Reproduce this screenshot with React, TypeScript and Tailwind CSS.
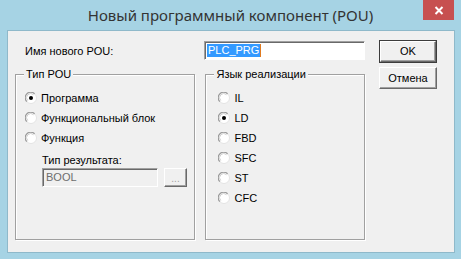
import React from "react";

const font = { fontFamily: '"Liberation Sans", Arial, sans-serif' };

function Radio({ checked }: { checked?: boolean }) {
  return (
    <svg width="12" height="12" viewBox="0 0 12 12" className="shrink-0">
      <circle cx="6" cy="6" r="5.5" fill="#ffffff" stroke="#e3e3e3" strokeWidth="1" />
      <path d="M1.8 9.6 A5 5 0 0 1 9.6 1.8" fill="none" stroke="#9a9a9a" strokeWidth="1.2" />
      <path d="M2.8 8.6 A3.8 3.8 0 0 1 8.6 2.8" fill="none" stroke="#d0d0d0" strokeWidth="1" />
      {checked && <circle cx="6" cy="6" r="2" fill="#000" />}
    </svg>
  );
}

function RadioRow({ label, checked }: { label: string; checked?: boolean }) {
  return (
    <div className="flex h-[20px] items-center gap-[4px]">
      <Radio checked={checked} />
      <span className="text-[11px] leading-[13px] text-black">{label}</span>
    </div>
  );
}

function Group({ title, className, children }: { title: string; className: string; children: React.ReactNode }) {
  return (
    <div className={"relative border border-[#a0a0a0] shadow-[inset_1px_1px_0_#ffffff,1px_1px_0_#ffffff] " + className}>
      <span className="absolute -top-[7px] left-[8px] bg-[#f0f0f0] px-[2px] text-[11px] leading-[13px] text-black">
        {title}
      </span>
      {children}
    </div>
  );
}

export default function App() {
  return (
    <div className="w-[461px] h-[259px] bg-[#a6d3e4] flex flex-col" style={font}>
      <div className="relative h-[30px] flex items-center justify-center">
        <span
          className="text-[15px] text-[#333333] leading-[20px] pb-[1px]"
          style={{ fontFamily: '"Noto Sans", "Open Sans", sans-serif' }}
        >
          Новый программный компонент (POU)
        </span>
        <div className="absolute left-[423px] top-0 w-[31px] h-[20px] bg-[#c75050] flex items-center justify-center">
          <svg width="10" height="9" viewBox="0 0 10 9">
            <path d="M1.5 1 L8.5 8 M8.5 1 L1.5 8" stroke="#ffffff" strokeWidth="2" />
          </svg>
        </div>
      </div>
      <div className="ml-[7px] w-[448px] h-[223px] border border-[#8fb9ca] bg-[#f0f0f0] flex pl-[7px] pt-[9px]">
        <div className="w-[350px] flex flex-col">
          <div className="flex h-[24px] items-start">
            <span className="ml-[10px] mt-[5px] w-[179px] text-[11px] leading-[13px] text-black">Имя нового POU:</span>
            <div className="mt-[1px] w-[161px] h-[19px] bg-white border border-[#a0a0a0] border-b-white border-r-white shadow-[inset_1px_1px_0_#696969] flex items-center pl-[2px]">
              <span className="bg-[#3399ff] text-white text-[11px] leading-[13px] px-[1px]">PLC_PRG</span>
              <span className="w-[1px] h-[13px] bg-[#e07a1f]" />
            </div>
          </div>
          <div className="mt-[10px] flex gap-[10px]">
            <Group title="Тип POU" className="w-[181px] h-[166px] pl-[9px] pt-[13px]">
              <RadioRow label="Программа" checked />
              <RadioRow label="Функциональный блок" />
              <RadioRow label="Функция" />
              <div className="ml-[17px] mt-[6px] text-[11px] leading-[13px] text-black">Тип результата:</div>
              <div className="ml-[17px] mt-[1px] flex gap-[6px]">
                <div className="w-[116px] h-[19px] bg-[#f0f0f0] border border-[#a0a0a0] border-b-white border-r-white shadow-[inset_1px_1px_0_#696969] flex items-center pl-[3px] text-[11px] leading-[13px] text-[#6d6d6d]">
                  BOOL
                </div>
                <div className="w-[23px] h-[19px] bg-[#f0f0f0] border border-white border-b-[#696969] border-r-[#696969] shadow-[inset_-1px_-1px_0_#a0a0a0] flex items-end justify-center pb-[2px] text-[10px] leading-[10px] text-[#a0a0a0]">
                  ...
                </div>
              </div>
            </Group>
            <Group title="Язык реализации" className="w-[160px] h-[166px] pl-[12px] pt-[13px]">
              <RadioRow label="IL" />
              <RadioRow label="LD" checked />
              <RadioRow label="FBD" />
              <RadioRow label="SFC" />
              <RadioRow label="ST" />
              <RadioRow label="CFC" />
            </Group>
          </div>
        </div>
        <div className="ml-[14px] flex flex-col gap-[4px]">
          <div className="w-[58px] h-[23px] border border-[#3c3c3c] bg-[#f0f0f0]">
            <div className="w-full h-full border border-white border-b-[#696969] border-r-[#696969] shadow-[inset_-1px_-1px_0_#a0a0a0] flex items-center justify-center text-[11px] leading-[13px] text-black">
              OK
            </div>
          </div>
          <div className="w-[58px] h-[22px] border border-white border-b-[#696969] border-r-[#696969] bg-[#f0f0f0] shadow-[inset_-1px_-1px_0_#a0a0a0] flex items-center justify-center text-[11px] leading-[13px] text-black">
            Отмена
          </div>
        </div>
      </div>
    </div>
  );
}
